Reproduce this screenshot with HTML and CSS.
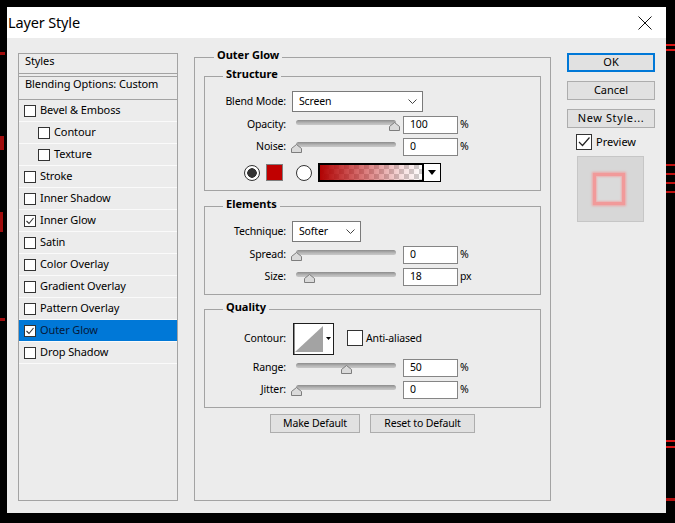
FILE: index.html
```html
<!DOCTYPE html>
<html lang="en">
<head>
<meta charset="utf-8">
<title>Layer Style</title>
<link rel="stylesheet" href="styles.css">
</head>
<body>
<div class="window">
  <div class="titlebar">
    <span class="title">Layer Style</span>
    <svg class="close" width="14" height="14" viewBox="0 0 14 14"><path d="M0.5 0.5L13.5 13.5M13.5 0.5L0.5 13.5" stroke="#111" stroke-width="1" fill="none"/></svg>
  </div>
  <div class="content">
    <div class="styles-panel">
      <div class="sp-head">Styles</div>
      <div class="sp-blend">Blending Options: Custom</div>
      <ul class="sp-list">
        <li class="sp-item"><span class="cb"></span><span class="t">Bevel &amp; Emboss</span></li>
        <li class="sp-item indent"><span class="cb"></span><span class="t">Contour</span></li>
        <li class="sp-item indent"><span class="cb"></span><span class="t">Texture</span></li>
        <li class="sp-item"><span class="cb"></span><span class="t">Stroke</span></li>
        <li class="sp-item"><span class="cb"></span><span class="t">Inner Shadow</span></li>
        <li class="sp-item"><span class="cb"><svg width="10" height="10" viewBox="0 0 10 10"><path d="M1.5 5L4 7.5L8.5 2" stroke="#333" stroke-width="1.1" fill="none"/></svg></span><span class="t">Inner Glow</span></li>
        <li class="sp-item"><span class="cb"></span><span class="t">Satin</span></li>
        <li class="sp-item"><span class="cb"></span><span class="t">Color Overlay</span></li>
        <li class="sp-item"><span class="cb"></span><span class="t">Gradient Overlay</span></li>
        <li class="sp-item"><span class="cb"></span><span class="t">Pattern Overlay</span></li>
        <li class="sp-item selected"><span class="cb"><svg width="10" height="10" viewBox="0 0 10 10"><path d="M1.5 5L4 7.5L8.5 2" stroke="#333" stroke-width="1.1" fill="none"/></svg></span><span class="t">Outer Glow</span></li>
        <li class="sp-item"><span class="cb"></span><span class="t">Drop Shadow</span></li>
      </ul>
    </div>

    <div class="main">
      <fieldset class="group outer">
        <legend>Outer Glow</legend>

        <fieldset class="group sub">
          <legend>Structure</legend>
          <div class="frow tall">
            <span class="lbl">Blend Mode:</span>
            <div class="select blend"><span>Screen</span><svg width="9" height="5" viewBox="0 0 9 5"><path d="M0.5 0.5L4.5 4.5L8.5 0.5" stroke="#444" fill="none"/></svg></div>
          </div>
          <div class="frow">
            <span class="lbl">Opacity:</span>
            <div class="slider"><div class="track"></div><svg class="thumb" style="left:97px" width="11" height="9" viewBox="0 0 11 9"><path d="M0.5 8.5V4.5L5.5 0.5L10.5 4.5V8.5Z" fill="#dadada" stroke="#7d7d7d"/></svg></div>
            <span class="num">100</span><span class="unit">%</span>
          </div>
          <div class="frow gap7">
            <span class="lbl">Noise:</span>
            <div class="slider"><div class="track"></div><svg class="thumb" style="left:-1px" width="11" height="9" viewBox="0 0 11 9"><path d="M0.5 8.5V4.5L5.5 0.5L10.5 4.5V8.5Z" fill="#dadada" stroke="#7d7d7d"/></svg></div>
            <span class="num">0</span><span class="unit">%</span>
          </div>
          <div class="color-row">
            <span class="radio on"></span>
            <span class="swatch"></span>
            <span class="radio"></span>
            <div class="grad-pick">
              <span class="grad"></span>
              <span class="grad-btn"><svg width="8" height="5" viewBox="0 0 8 5"><path d="M0 0H8L4 5Z" fill="#000"/></svg></span>
            </div>
          </div>
        </fieldset>

        <fieldset class="group sub elements">
          <legend>Elements</legend>
          <div class="frow tall">
            <span class="lbl">Technique:</span>
            <div class="select technique"><span>Softer</span><svg width="9" height="5" viewBox="0 0 9 5"><path d="M0.5 0.5L4.5 4.5L8.5 0.5" stroke="#444" fill="none"/></svg></div>
          </div>
          <div class="frow">
            <span class="lbl">Spread:</span>
            <div class="slider"><div class="track"></div><svg class="thumb" style="left:-1px" width="11" height="9" viewBox="0 0 11 9"><path d="M0.5 8.5V4.5L5.5 0.5L10.5 4.5V8.5Z" fill="#dadada" stroke="#7d7d7d"/></svg></div>
            <span class="num">0</span><span class="unit">%</span>
          </div>
          <div class="frow">
            <span class="lbl">Size:</span>
            <div class="slider"><div class="track"></div><svg class="thumb" style="left:12px" width="11" height="9" viewBox="0 0 11 9"><path d="M0.5 8.5V4.5L5.5 0.5L10.5 4.5V8.5Z" fill="#dadada" stroke="#7d7d7d"/></svg></div>
            <span class="num">18</span><span class="unit">px</span>
          </div>
        </fieldset>

        <fieldset class="group sub quality">
          <legend>Quality</legend>
          <div class="frow contour-row">
            <span class="lbl">Contour:</span>
            <svg class="contour" width="41" height="32" viewBox="0 0 41 32">
              <rect x="0.5" y="0.5" width="40" height="31" fill="#fff" stroke="#1e1e1e"/>
              <path d="M1 0.5V31.5" stroke="#1e1e1e" fill="none"/>
              <path d="M2 29L30 3V29Z" fill="#a3a3a3"/>
              <path d="M33 14H38L35.5 17Z" fill="#000"/>
            </svg>
            <span class="cbox"></span>
            <span class="cbox-label">Anti-aliased</span>
          </div>
          <div class="frow">
            <span class="lbl">Range:</span>
            <div class="slider"><div class="track"></div><svg class="thumb" style="left:49px" width="11" height="9" viewBox="0 0 11 9"><path d="M0.5 8.5V4.5L5.5 0.5L10.5 4.5V8.5Z" fill="#dadada" stroke="#7d7d7d"/></svg></div>
            <span class="num">50</span><span class="unit">%</span>
          </div>
          <div class="frow">
            <span class="lbl">Jitter:</span>
            <div class="slider"><div class="track"></div><svg class="thumb" style="left:-1px" width="11" height="9" viewBox="0 0 11 9"><path d="M0.5 8.5V4.5L5.5 0.5L10.5 4.5V8.5Z" fill="#dadada" stroke="#7d7d7d"/></svg></div>
            <span class="num">0</span><span class="unit">%</span>
          </div>
        </fieldset>

        <div class="default-buttons">
          <button class="btn make">Make Default</button>
          <button class="btn reset">Reset to Default</button>
        </div>
      </fieldset>
    </div>

    <div class="side">
      <button class="btn primary">OK</button>
      <button class="btn">Cancel</button>
      <button class="btn newstyle">New Style...</button>
      <div class="preview-check">
        <span class="pcb"><svg width="14" height="14" viewBox="0 0 14 14"><path d="M2 7L5.5 10.5L12.5 2.5" stroke="#222" stroke-width="1.2" fill="none"/></svg></span>
        <span class="t">Preview</span>
      </div>
      <div class="preview-box"><div class="glow-square"></div></div>
    </div>
  </div>
</div>
</body>
</html>
```

FILE: styles.css
```css
* { box-sizing: border-box; }

html, body { margin: 0; }

body {
  width: 675px;
  height: 523px;
  overflow: hidden;
  padding: 7px 0 0 7px;
  background-color: #000;
  background-image:
    linear-gradient(#d81414, #d81414),
    linear-gradient(#d81414, #d81414),
    linear-gradient(#c01010, #c01010),
    linear-gradient(#c01010, #c01010),
    linear-gradient(#c01010, #c01010),
    linear-gradient(#c01010, #c01010),
    linear-gradient(#d81414, #d81414),
    linear-gradient(#d81414, #d81414),
    linear-gradient(#b00e0e, #b00e0e),
    linear-gradient(#a00c0c, #a00c0c),
    linear-gradient(#a00c0c, #a00c0c),
    linear-gradient(#a00c0c, #a00c0c),
    linear-gradient(#a00c0c, #a00c0c);
  background-repeat: no-repeat;
  background-size:
    9px 2px, 9px 2px, 9px 2px, 9px 2px, 9px 2px, 9px 2px, 9px 2px, 9px 2px, 9px 3px,
    5px 3px, 4px 14px, 3px 20px, 5px 3px;
  background-position:
    right 0 top 44px,
    right 0 top 49px,
    right 0 top 164px,
    right 0 top 173px,
    right 0 top 182px,
    right 0 top 191px,
    right 0 top 440px,
    right 0 top 446px,
    right 0 top 498px,
    0 52px,
    0 136px,
    0 212px,
    0 318px;
  font-family: "Noto Sans", "Open Sans", sans-serif;
  font-size: 11px;
  color: #000;
}

.window {
  width: 659px;
  height: 506px;
  background: #ececec;
  display: flex;
  flex-direction: column;
}

.titlebar {
  flex: none;
  height: 31px;
  background: #fff;
  display: flex;
  align-items: center;
  justify-content: space-between;
  padding: 0 14px 0 1px;
}

.title {
  font-size: 14.5px;
  line-height: 20px;
  padding-bottom: 2px;
  letter-spacing: -0.15px;
  color: #000;
}

.close { display: block; }

.content {
  display: flex;
  align-items: flex-start;
  gap: 16px;
  padding: 11px 0 0 11px;
}

/* Styles list */
.styles-panel {
  flex: none;
  margin-top: 4px;
  width: 160px;
  height: 448px;
  border: 1px solid #a3a3a3;
  letter-spacing: -0.1px;
}

.sp-head {
  height: 20px;
  line-height: 13px;
  padding-left: 6px;
  border-bottom: 1px solid #a3a3a3;
  margin-bottom: 2px;
}

.sp-blend {
  height: 24px;
  line-height: 14px;
  padding-left: 6px;
  border-top: 1px solid #a3a3a3;
  border-bottom: 1px solid #a3a3a3;
}

.sp-list {
  list-style: none;
  margin: 0;
  padding: 0;
}

.sp-item {
  height: 22px;
  display: flex;
  align-items: center;
  padding-left: 5px;
  border-bottom: 1px solid #fafafa;
}

.sp-item .t { padding-bottom: 2px; }

.sp-item.indent { padding-left: 19px; }

.sp-item.selected {
  background: #0078d7;
  color: #06183a;
}

.cb {
  flex: none;
  width: 12px;
  height: 12px;
  margin-right: 4px;
  border: 1px solid #333;
  background: #fff;
  display: flex;
  align-items: center;
  justify-content: center;
}

/* Main area */
.main {
  flex: none;
  width: 357px;
  font-size: 10.5px;
  letter-spacing: -0.15px;
}

.group {
  margin: 0;
  min-width: 0;
  border: 1px solid #a3a3a3;
}

.group > legend {
  font-size: 11px;
  letter-spacing: 0;
  font-weight: 700;
  line-height: 12px;
  padding: 0 3px 4px;
}

.outer {
  height: 452px;
  padding: 3px 9px 0;
}

.outer > legend { margin-left: 10px; }

.sub {
  padding: 7px 0 8px;
}

.sub > legend { margin-left: 18px; }

.elements { margin-top: 7px; }

.quality {
  margin-top: 6px;
  padding-top: 6px;
}

.frow {
  display: flex;
  align-items: center;
  height: 18px;
  margin-bottom: 4px;
}

.frow:last-child { margin-bottom: 0; }
.frow.tall { height: 21px; }
.frow.gap7 { margin-bottom: 7px; }
.frow.contour-row { height: 32px; }

.lbl {
  flex: none;
  width: 83px;
  padding-right: 2px;
  padding-bottom: 2px;
  text-align: right;
  margin-right: 4px;
}

.select {
  height: 21px;
  display: flex;
  align-items: center;
  justify-content: space-between;
  padding: 0 5px 0 6px;
  border: 1px solid #7a7a7a;
  background: #fff;
}

.select span { padding-bottom: 2px; }
.select svg { display: block; }
.select.blend { width: 131px; }
.select.technique { width: 69px; }

.slider {
  position: relative;
  flex: none;
  width: 107px;
  height: 18px;
  margin-right: 4px;
}

.track {
  position: absolute;
  left: 4px;
  top: 4px;
  width: 100px;
  height: 5px;
  border-radius: 3px;
  background: linear-gradient(#8c8c8c, #b8b8b8 60%, #c8c8c8);
}

.thumb {
  position: absolute;
  top: 6px;
  display: block;
}

.num {
  flex: none;
  width: 55px;
  height: 18px;
  line-height: 14px;
  padding: 0 0 2px 6px;
  border: 1px solid #858585;
  background: #fff;
}

.unit {
  margin-left: 2px;
  padding-bottom: 2px;
}

/* colour row */
.color-row {
  display: flex;
  align-items: center;
  height: 19px;
  padding-left: 39px;
}

.radio {
  flex: none;
  width: 16px;
  height: 16px;
  border-radius: 50%;
  border: 1px solid #333;
  background: #fff;
}

.radio.on {
  background: radial-gradient(circle, #333 0 4.5px, #fff 5px);
}

.swatch {
  flex: none;
  width: 17px;
  height: 17px;
  margin: 0 13px 0 6px;
  border: 1px solid #7e7e7e;
  background: #c00000;
}

.grad-pick {
  flex: none;
  margin-left: 6px;
  width: 123px;
  height: 19px;
  display: flex;
  border: 1px solid #000;
}

.grad {
  width: 104px;
  height: 100%;
  background:
    linear-gradient(to right, rgba(176, 0, 0, 1), rgba(190, 20, 20, 0.55) 45%, rgba(200, 40, 40, 0.15) 80%, rgba(200, 40, 40, 0)),
    repeating-conic-gradient(#cfcfcf 0 25%, #fff 0 50%) 0 0 / 10px 10px;
  box-shadow: inset 0 0 0 1px #000;
}

.grad-btn {
  flex: 1;
  border-left: 1px solid #000;
  background: #fff;
  display: flex;
  align-items: center;
  justify-content: center;
}

.grad-btn svg { display: block; }

/* quality */
.contour {
  display: block;
  flex: none;
  margin-left: 1px;
}

.cbox {
  flex: none;
  width: 16px;
  height: 16px;
  margin: 0 0 3px 13px;
  border: 1px solid #333;
  background: #fff;
}

.cbox-label {
  margin-left: 3px;
  padding-bottom: 3px;
}

/* buttons */
.btn {
  font-family: inherit;
  font-size: inherit;
  letter-spacing: inherit;
  color: #000;
  height: 19px;
  padding: 0;
  line-height: 17px;
  background: #e1e1e1;
  border: 1px solid #adadad;
  border-radius: 0;
}

.default-buttons {
  display: flex;
  justify-content: center;
  gap: 10px;
  margin-top: 6px;
}

.btn.make { width: 90px; }
.btn.reset { width: 105px; }

.side {
  flex: none;
  width: 88px;
  margin-top: 4px;
  display: flex;
  flex-direction: column;
}

.side .btn {
  width: 88px;
  line-height: 16px;
  padding-bottom: 1px;
}

.side .btn + .btn { margin-top: 9px; }

.side .btn.primary {
  border: 2px solid #0078d7;
  line-height: 14px;
}

.side .btn.newstyle { letter-spacing: 0.6px; }

.preview-check {
  display: flex;
  align-items: center;
  height: 16px;
  margin: 6px 0 0 9px;
  gap: 4px;
}

.preview-check .t { padding-bottom: 2px; }

.pcb {
  flex: none;
  width: 16px;
  height: 16px;
  border: 1px solid #333;
  background: #fff;
  display: flex;
  align-items: center;
  justify-content: center;
}

.pcb svg { display: block; }

.preview-box {
  width: 67px;
  height: 66px;
  margin: 6px 0 0 10px;
  padding: 16px 0 0 15px;
  background: #d7d7d7;
  border: 1px solid #c6c6c6;
}

.glow-square {
  width: 32px;
  height: 32px;
  border: 3px solid #f19a9a;
  background: #dadada;
  box-shadow: 0 0 2px 1px rgba(245, 150, 150, 0.8), inset 0 0 2px 1px rgba(245, 160, 160, 0.7);
}
```
